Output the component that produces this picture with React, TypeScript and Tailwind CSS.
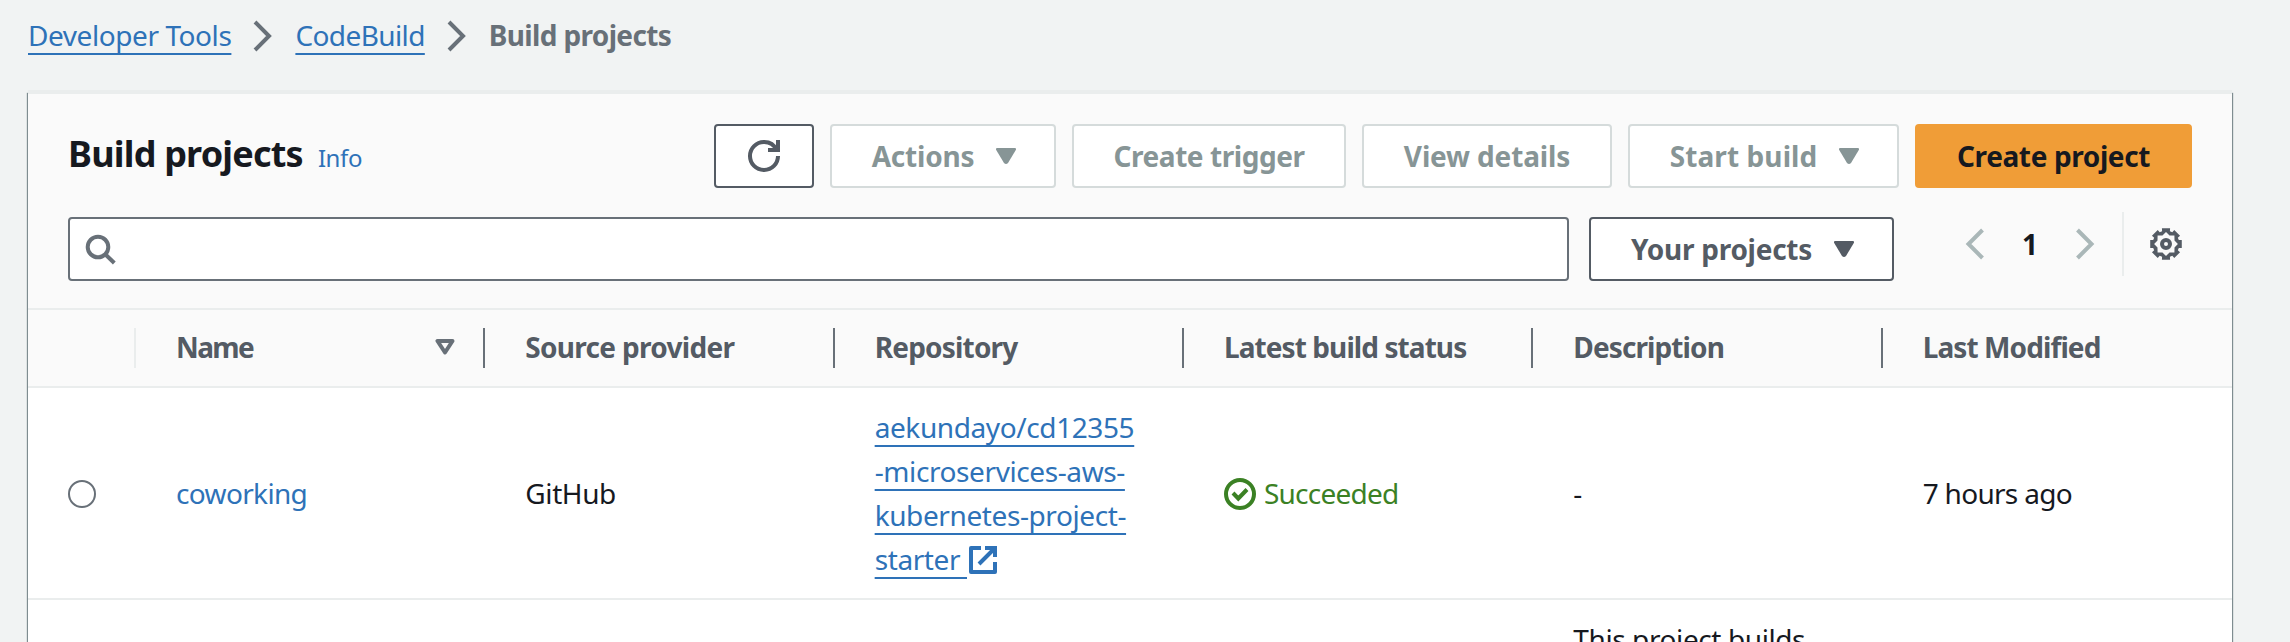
import type { ReactNode } from "react";

function Chevron() {
  return (
    <svg className="h-8 w-8 shrink-0" viewBox="0 0 32 32" fill="none" stroke="#687078" strokeWidth="4">
      <path d="M8 2 L22 16 L8 30" />
    </svg>
  );
}

function Caret() {
  return (
    <svg className="h-4 w-5 shrink-0" viewBox="0 0 20 16" fill="currentColor">
      <path d="M1 0 H19 Q20.6 0.4 19.8 2 L12 15 Q10 17 8 15 L0.2 2 Q-0.6 0.4 1 0 Z" />
    </svg>
  );
}

function RefreshIcon() {
  return (
    <svg className="h-8 w-8" viewBox="0 0 16 16" fill="none" stroke="currentColor" strokeWidth="2">
      <path d="M10 5h5V0" />
      <path d="M15 8a6.96 6.96 0 0 1-7 7 6.96 6.96 0 0 1-7-7 6.96 6.96 0 0 1 7-7 6.87 6.87 0 0 1 6.3 4" />
    </svg>
  );
}

function SearchIcon() {
  return (
    <svg className="h-8 w-8" viewBox="0 0 32 32" fill="none" stroke="#687078" strokeWidth="4">
      <circle cx="14" cy="14" r="10.3" />
      <path d="M21 21 L30.3 30" />
    </svg>
  );
}

function ExternalIcon() {
  return (
    <svg className="inline-block h-8 w-8 align-[-6px]" viewBox="0 0 16 16" fill="none" stroke="currentColor" strokeWidth="2">
      <path strokeLinejoin="round" d="M14 9v5H2V2h5" />
      <path d="M9 2h5v4.5M6 10l8-8" />
    </svg>
  );
}

function CheckIcon() {
  return (
    <svg className="h-8 w-8 shrink-0" viewBox="0 0 32 32" fill="none" stroke="currentColor" strokeWidth="4">
      <circle cx="16" cy="16" r="14" />
      <path d="M9 15 L14.3 20.5 L23 11.5" />
    </svg>
  );
}

function gearPath() {
  const outer: string[] = [];
  const inner: string[] = [];
  const point = (r: number, deg: number) => {
    const a = (deg * Math.PI) / 180;
    return `${(16 + r * Math.cos(a)).toFixed(2)} ${(16 + r * Math.sin(a)).toFixed(2)}`;
  };
  for (let i = 0; i < 8; i++) {
    const d = i * 45;
    outer.push(point(13.4, d - 17), point(16.3, d - 14.5), point(16.3, d + 14.5), point(13.4, d + 17));
    inner.push(point(11.9, d), point(9.2, d + 22.5));
  }
  return `M${outer.join("L")}Z M${inner.join("L")}Z`;
}

function GearIcon() {
  return (
    <svg className="h-8 w-8" viewBox="0 0 32 32">
      <path fill="#545b64" fillRule="evenodd" d={gearPath()} />
      <circle cx="16" cy="16" r="4" fill="none" stroke="#545b64" strokeWidth="4" />
    </svg>
  );
}

function Button({ children, className }: { children: ReactNode; className: string }) {
  return (
    <button
      className={
        "flex h-16 shrink-0 items-center justify-center gap-[22px] rounded-[4px] border-2 font-bold whitespace-nowrap " +
        className
      }
    >
      {children}
    </button>
  );
}

const disabled = "border-[#d5dbdb] bg-white text-[#879596]";

const columns = [
  { title: "Name", tracking: "tracking-[-1.6px]" },
  { title: "Source provider", tracking: "tracking-[-0.7px]" },
  { title: "Repository", tracking: "tracking-[-0.8px]" },
  { title: "Latest build status", tracking: "tracking-[-0.92px]" },
  { title: "Description", tracking: "tracking-[-0.9px]" },
  { title: "Last Modified", tracking: "tracking-[-0.9px]" },
];

const link =
  "text-[#2e72b8] underline decoration-2 underline-offset-[7px] [text-decoration-skip-ink:none]";

const rowGrid = "grid grid-cols-[108px_repeat(6,minmax(0,1fr))]";

export default function App() {
  return (
    <div className="h-[642px] w-[2290px] overflow-hidden bg-[#f1f3f3] font-['Noto_Sans',sans-serif] text-[28px] leading-[44px] text-[#16191f]">
      <nav className="flex h-[90px] items-start pt-[13px] pl-7">
        <a className={link + " tracking-[-0.43px]"}>Developer Tools</a>
        <span className="mt-[7px] ml-4 flex">
          <Chevron />
        </span>
        <a className={link + " ml-4 tracking-[-0.6px]"}>CodeBuild</a>
        <span className="mt-[7px] ml-4 flex">
          <Chevron />
        </span>
        <span className="ml-4 font-bold tracking-[-0.65px] text-[#687078]">Build projects</span>
      </nav>

      <main className="ml-7 h-[560px] w-[2204px] border-t-4 border-[#eaeded] bg-white shadow-[1px_3px_1px_0_#7f8c90,-1px_3px_1px_0_#7f8c90]">
        <header className="h-[216px] border-b-2 border-[#eaeded] bg-[#fafafa] px-10 pt-[30px]">
          <div className="flex items-center">
            <h1 className="mb-1 text-[36px] leading-[48px] font-bold tracking-[-0.8px]">Build projects</h1>
            <a className="mt-[3px] ml-[15px] text-[24px] tracking-[-0.4px] text-[#2e72b8]">Info</a>
            <div className="ml-auto flex gap-4">
              <Button className="w-[100px] border-[#545b64] bg-white text-[#545b64]">
                <RefreshIcon />
              </Button>
              <Button className={"w-[226px] pl-[2px] tracking-[-0.2px] " + disabled}>
                Actions <Caret />
              </Button>
              <Button className={"w-[274px] tracking-[-0.45px] " + disabled}>Create trigger</Button>
              <Button className={"w-[250px] tracking-[-0.15px] " + disabled}>View details</Button>
              <Button className={"w-[271px] pl-[2px] tracking-[0.1px] " + disabled}>
                Start build <Caret />
              </Button>
              <Button className="w-[277px] border-[#f09d37] bg-[#f09d37] tracking-[-0.38px] text-[#16191f]">
                Create project
              </Button>
            </div>
          </div>

          <div className="mt-[29px] flex">
            <label className="flex h-16 w-[1501px] items-center rounded-[4px] border-2 border-[#687078] bg-white pl-[14px]">
              <SearchIcon />
            </label>
            <Button className="ml-5 w-[305px] border-[#545b64] bg-white pl-[2px] tracking-[-0.27px] text-[#545b64]">
              Your projects <Caret />
            </Button>
            <div className="mt-[-5px] ml-auto flex h-16 items-center">
              <svg className="h-8 w-5" viewBox="0 0 20 32" fill="none" stroke="#aab7b8" strokeWidth="4">
                <path d="M17.5 2 L3.5 16 L17.5 30" />
              </svg>
              <span className="w-[90px] text-center font-bold">1</span>
              <svg className="h-8 w-5" viewBox="0 0 20 32" fill="none" stroke="#aab7b8" strokeWidth="4">
                <path d="M2.5 2 L16.5 16 L2.5 30" />
              </svg>
              <div className="ml-[27px] h-16 w-[2px] bg-[#eaeded]" />
              <div className="mr-[10px] ml-[26px]">
                <GearIcon />
              </div>
            </div>
          </div>
        </header>

        <div className={rowGrid + " h-[78px] items-center border-b-2 border-[#eaeded] bg-[#fafafa] font-bold text-[#545b64]"}>
          <div className="h-10 border-r-2 border-[#eaeded]" />
          {columns.map((c, i) => (
            <div
              key={c.title}
              className={
                "flex h-10 items-center justify-between pr-[28px] pb-[2px] pl-10 " +
                (i < 5 ? "border-r-2 border-[#687078]" : "")
              }
            >
              <span className={c.tracking}>{c.title}</span>
              {i === 0 && (
                <svg className="h-4 w-5" viewBox="0 0 20 16" fill="none" stroke="#687078" strokeWidth="4" strokeLinejoin="round">
                  <path d="M2.5 2 H17.5 L10 13.5 Z" />
                </svg>
              )}
            </div>
          ))}
        </div>

        <div className={rowGrid + " h-[212px] items-center border-b-2 border-[#eaeded]"}>
          <div className="mt-[2px] ml-10 size-7 rounded-full border-2 border-[#687078] bg-white" />
          <a className="pl-10 tracking-[-0.65px] text-[#2e72b8]">coworking</a>
          <span className="pl-10 tracking-[-0.4px]">GitHub</span>
          <div className="pl-10 whitespace-nowrap text-[#2e72b8]">
            <a className={link + " tracking-[-0.4px]"}>
              aekundayo/cd12355
              <br />
              -microservices-aws-
              <br />
              kubernetes-project-
              <br />
              starter&nbsp;
            </a>
            <ExternalIcon />
          </div>
          <div className="flex items-center gap-2 pl-10 tracking-[-0.78px] text-[#3b8124]">
            <span className="mt-[2px]">
              <CheckIcon />
            </span>
            Succeeded
          </div>
          <span className="pl-10">-</span>
          <span className="pl-10 tracking-[-0.7px]">7 hours ago</span>
        </div>

        <div className={rowGrid + " pt-[17px]"}>
          <span className="col-start-6 pl-10 tracking-[-0.4px] whitespace-nowrap">This project builds</span>
        </div>
      </main>
    </div>
  );
}
